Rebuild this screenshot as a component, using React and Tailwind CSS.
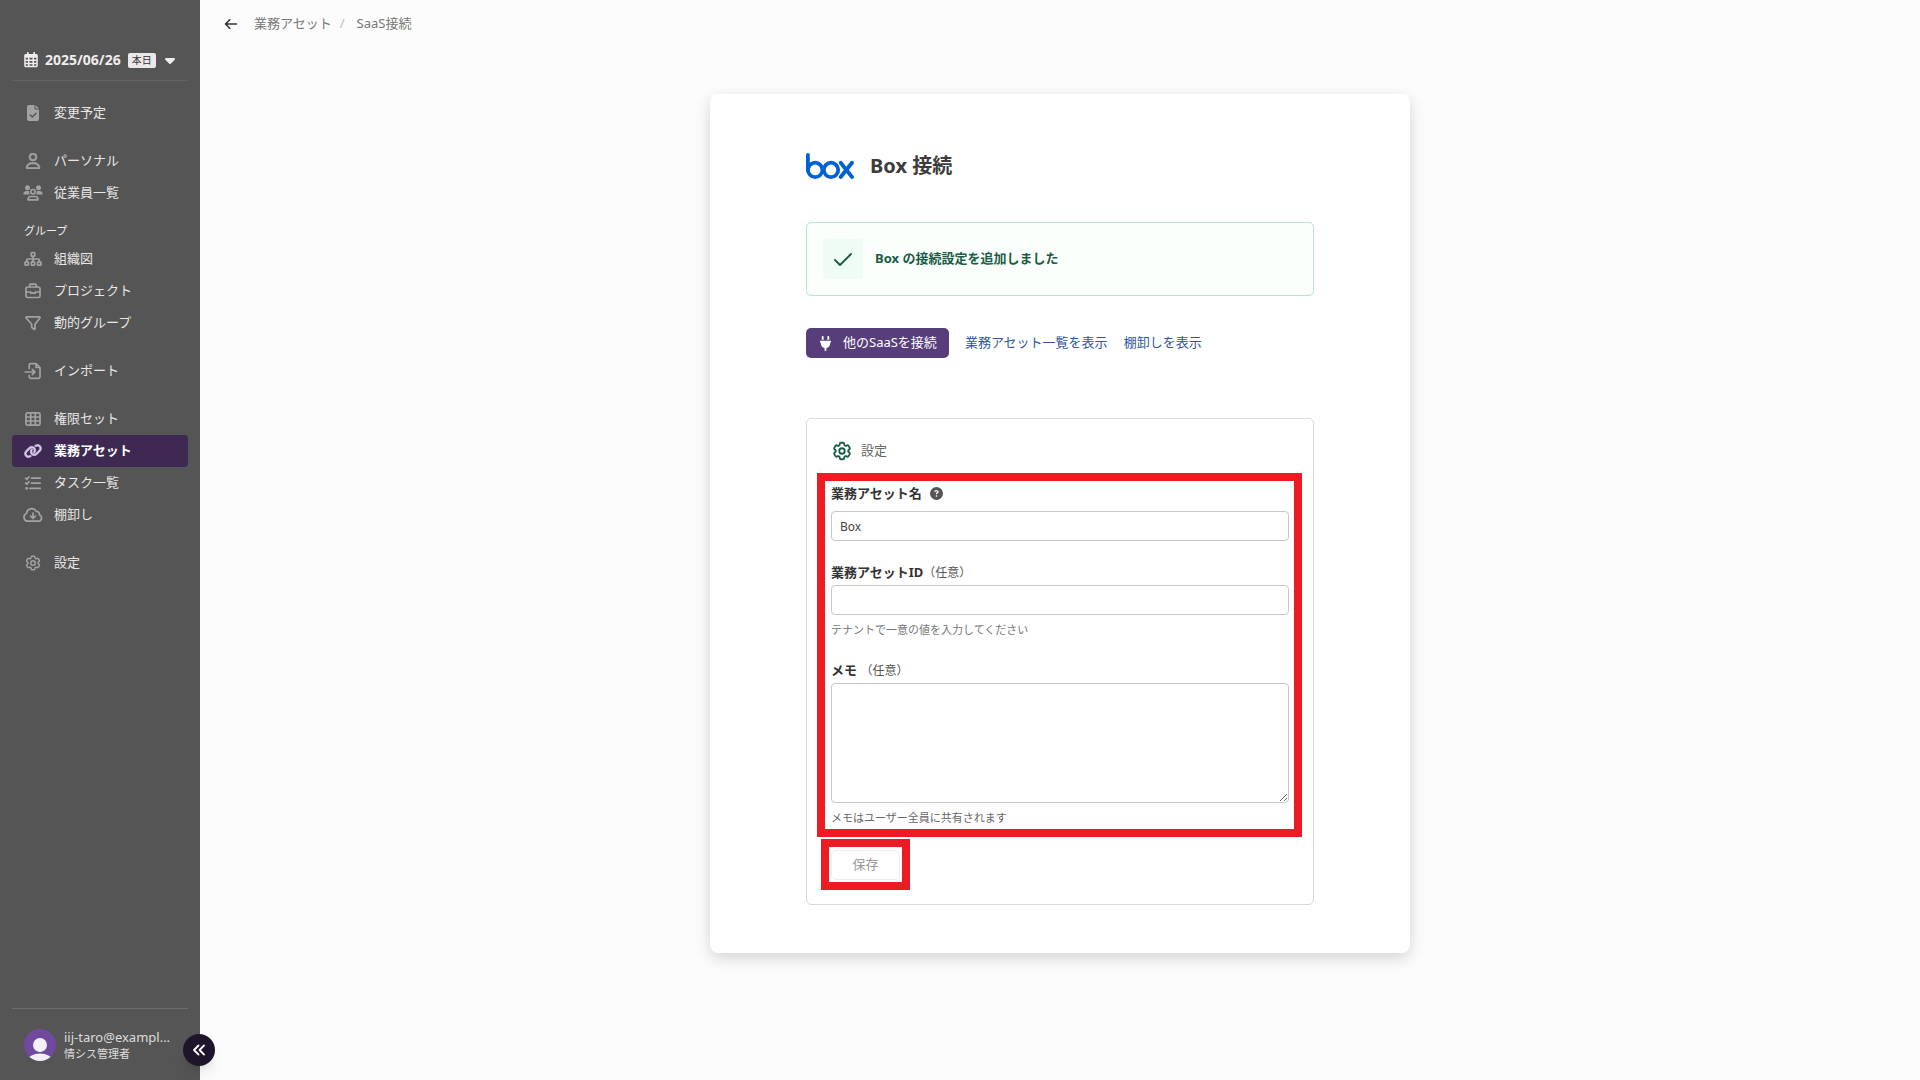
import { FaRegUser, FaLink, FaPlug, FaCaretDown, FaCircleQuestion } from "react-icons/fa6";
import { HiOutlineCog6Tooth } from "react-icons/hi2";

function Icon({ w = 18, h = 18, sw = 1.7, children }) {
  return (
    <svg width={w} height={h} viewBox={`0 0 ${w} ${h}`} fill="none" stroke="currentColor" strokeWidth={sw} strokeLinecap="round" strokeLinejoin="round" aria-hidden="true">
      {children}
    </svg>
  );
}

const CalendarIcon = () => (
  <svg className="shrink-0" width="14" height="16" viewBox="0 0 14 16" fill="currentColor" aria-hidden="true">
    <path fillRule="evenodd" d="M3 .8a.8.8 0 0 1 1.7 0V2h4.600V.8a.8.8 0 0 1 1.7 0V2h1.300c.8 0 1.500.7 1.500 1.500v10.300c0 .8-.7 1.500-1.500 1.500H1.700c-.8 0-1.500-.7-1.500-1.500V3.500C.2 2.700.9 2 1.700 2H3zM1.700 5.800v1.700h2.300V5.800zM5.500 5.800v1.700h3V5.800zM10 5.800v1.700h2.300V5.800zM1.700 9v1.700h2.300V9zM5.500 9v1.700h3V9zM10 9v1.700h2.300V9zM1.700 12.200v1.600h2.300v-1.600zM5.500 12.200v1.600h3v-1.600zM10 12.200v1.600h2.300v-1.600z" />
  </svg>
);

const FileCheckIcon = () => (
  <svg width="18" height="18" viewBox="0 0 18 18" aria-hidden="true">
    <path fill="currentColor" d="M5 1h5.500v3.500c0 .6.4 1 1 1H15V15a2 2 0 0 1-2 2H5a2 2 0 0 1-2-2V3a2 2 0 0 1 2-2zM11.500 1L15 4.500h-3.500z" />
    <path d="M6.300 11l2 2 3.500-3.600" fill="none" stroke="#555555" strokeWidth="1.500" strokeLinecap="round" strokeLinejoin="round" />
  </svg>
);

const PeopleIcon = () => (
  <svg width="20" height="18" viewBox="0 0 20 18" fill="currentColor" aria-hidden="true">
    <circle cx="4.500" cy="3.700" r="2.500" />
    <circle cx="15.500" cy="3.700" r="2.500" />
    <path d="M.3 10.500C.3 8.500 1.500 7 3.300 7h1.500c.5 0 1 .1 1.400.3-.2 1.200.1 2.300.9 3.200zM19.700 10.500c0-2-1.200-3.500-3-3.500h-1.500c-.5 0-1 .1-1.400.3.200 1.200-.1 2.300-.9 3.200z" />
    <circle cx="10" cy="7.700" r="2.200" fill="none" stroke="currentColor" strokeWidth="1.700" />
    <path d="M5 15.800c0-1.900 1.300-3.300 3.100-3.300h3.800c1.800 0 3.100 1.400 3.100 3.300z" fill="none" stroke="currentColor" strokeWidth="1.700" strokeLinejoin="round" />
  </svg>
);

const SitemapIcon = () => (
  <Icon>
    <rect x="7.200" y="2.600" width="3.600" height="3.600" rx=".8" />
    <rect x="1" y="11.800" width="3.400" height="3.400" rx=".8" />
    <rect x="7.300" y="11.800" width="3.400" height="3.400" rx=".8" />
    <rect x="13.600" y="11.800" width="3.400" height="3.400" rx=".8" />
    <path d="M9 6.500v5M2.700 11.500V10c0-.6.4-1 1-1h10.600c.6 0 1 .4 1 1v1.500" />
  </Icon>
);

const BriefcaseIcon = () => (
  <Icon>
    <rect x="2" y="5" width="14" height="10.500" rx="1.600" />
    <path d="M5.700 5V3.200c0-.6.4-1 1-1h4.600c.6 0 1 .4 1 1V5M2 10h4.800v1.200h4.400V10H16" />
  </Icon>
);

const FilterIcon = () => (
  <Icon>
    <path d="M2.600 2.800h12.800c.6 0 .9.700.5 1.200L11 10.200v4.600c0 .5-.5.800-.9.500l-2-1.500c-.3-.2-.4-.4-.4-.7v-2.900L2.100 4c-.4-.5-.1-1.200.5-1.200z" />
  </Icon>
);

const ImportIcon = () => (
  <Icon>
    <path d="M5.200 6.500V3.200c0-.9.700-1.600 1.600-1.600h5.200L16 5.500v9.300c0 .9-.7 1.600-1.600 1.600H6.800c-.9 0-1.600-.7-1.600-1.600v-1.500M12 1.800v3.700h3.800M1.200 10h9.600M8.300 7.300L11 10l-2.700 2.700" />
  </Icon>
);

const TableIcon = () => (
  <Icon>
    <rect x="2" y="2.800" width="14" height="12.400" rx="1.500" />
    <path d="M2 7h14M2 11h14M6.700 3v12M11.300 3v12" />
  </Icon>
);

const TasksIcon = () => (
  <Icon>
    <path d="M1.600 4.200l1.200 1.200 2.200-2.600M1.600 9l1.200 1.200L5 7.600M7.500 4.200h8.700M7.500 9.200h8.700M6 14.400h10.200" />
    <circle cx="2.700" cy="14.400" r=".6" fill="currentColor" />
  </Icon>
);

const CloudIcon = () => (
  <Icon w={20}>
    <path d="M5 15.200a4 4 0 0 1-1.500-7.700 5.200 5.200 0 0 1 9.700-2.200 3.200 3.200 0 0 1 3.300 3.600 3.300 3.300 0 0 1-.7 6.300zM10 7v5.200M7.700 10.200l2.300 2.300 2.300-2.300" />
  </Icon>
);

const ArrowLeftIcon = () => (
  <Icon w={14} h={14} sw={1.6}>
    <path d="M12.500 7H1.800M5.800 2.800L1.500 7l4.300 4.200" />
  </Icon>
);

const BoxLogo = () => (
  <svg width="48" height="26" viewBox="0 0 48 26" fill="none" stroke="#0061d5" strokeWidth="3.800" strokeLinecap="round" role="img" aria-label="Box">
    <path d="M1.900 2v15" />
    <circle cx="9.200" cy="16.900" r="7.200" />
    <circle cx="25" cy="16.900" r="7.200" />
    <path d="M34.700 9.700L46 24M46 9.700L34.700 24" />
  </svg>
);

const Avatar = () => (
  <svg className="shrink-0" width="32" height="32" viewBox="0 0 32 32" aria-hidden="true">
    <defs>
      <clipPath id="avatar-clip">
        <circle cx="16" cy="16" r="16" />
      </clipPath>
    </defs>
    <g clipPath="url(#avatar-clip)">
      <rect width="32" height="32" fill="#6f4a9e" />
      <circle cx="16" cy="16" r="7" fill="#f3f0f7" />
      <ellipse cx="16" cy="31" rx="12" ry="6.500" fill="#f3f0f7" />
    </g>
  </svg>
);

const groups = [
  { items: [{ label: "変更予定", icon: <FileCheckIcon /> }] },
  {
    items: [
      { label: "パーソナル", icon: <FaRegUser size={16} strokeWidth={20} /> },
      { label: "従業員一覧", icon: <PeopleIcon /> },
    ],
  },
  {
    title: "グループ",
    items: [
      { label: "組織図", icon: <SitemapIcon /> },
      { label: "プロジェクト", icon: <BriefcaseIcon /> },
      { label: "動的グループ", icon: <FilterIcon /> },
    ],
  },
  { items: [{ label: "インポート", icon: <ImportIcon /> }] },
  {
    items: [
      { label: "権限セット", icon: <TableIcon /> },
      { label: "業務アセット", icon: <FaLink size={18} strokeWidth={20} />, active: true },
      { label: "タスク一覧", icon: <TasksIcon /> },
      { label: "棚卸し", icon: <CloudIcon /> },
    ],
  },
  { items: [{ label: "設定", icon: <HiOutlineCog6Tooth size={18} strokeWidth={2} /> }] },
];

function NavItem({ label, icon, active }) {
  return (
    <li>
      <a
        href="#"
        aria-current={active ? "page" : undefined}
        className={
          active
            ? "flex h-8 items-center gap-3 rounded bg-[#3d2952] px-3 font-bold text-white"
            : "flex h-8 items-center gap-3 px-3 text-[#e8e6e6]"
        }
      >
        <span className={active ? "flex w-[18px] shrink-0 justify-center text-[#d9c8ee]" : "flex w-[18px] shrink-0 justify-center text-[#a3a1a1]"}>
          <span className="shrink-0">{icon}</span>
        </span>
        {label}
      </a>
    </li>
  );
}

function Sidebar() {
  return (
    <aside className="relative flex w-[200px] shrink-0 flex-col bg-[#555555] px-3">
      <div className="border-b border-[#636363] pt-10">
        <button type="button" className="flex h-10 items-center px-3 whitespace-nowrap text-[#f0ecec]">
          <CalendarIcon />
          <span className="ml-[7px] text-sm font-bold">2025/06/26</span>
          <span className="ml-[7px] rounded-xs bg-[#ebe8ec] px-1 text-[10px] leading-[15px] text-[#333333]">本日</span>
          <FaCaretDown className="ml-1.5 shrink-0" size={16} />
        </button>
      </div>
      <nav className="flex-1">
        {groups.map((group, i) => (
          <div key={i} className={group.title ? "mt-2.5" : "mt-4"}>
            {group.title && <h2 className="px-3 text-[11px] leading-6 text-[#f0eeee]">{group.title}</h2>}
            <ul>
              {group.items.map((item) => (
                <NavItem key={item.label} {...item} />
              ))}
            </ul>
          </div>
        ))}
      </nav>
      <div className="flex h-[72px] items-center gap-2 border-t border-[#6e6e6e] px-3 text-[#dedcdc]">
        <Avatar />
        <div className="min-w-0 flex-1">
          <p className="text-[13px] leading-[18px] whitespace-nowrap">iij-taro@exampl...</p>
          <p className="text-[11px] leading-4">情シス管理者</p>
        </div>
      </div>
      <button type="button" aria-label="メニューを閉じる" className="absolute -right-[15px] bottom-3.5 flex size-8 items-center justify-center rounded-full bg-[#1f152b] text-white shadow-lg">
        <Icon w={14} h={14} sw={1.8}>
          <path d="M6.500 2.500L2 7l4.500 4.500M12 2.500L7.500 7l4.500 4.500" />
        </Icon>
      </button>
    </aside>
  );
}

const inputClass = "block h-[30px] w-full rounded border border-[#c8c8c8] bg-white px-2 text-xs text-[#444444]";

function SettingsForm() {
  return (
    <form className="mt-[60px] rounded-[5px] border border-[#dadada] px-6 pt-5 pb-6" onSubmit={(e) => e.preventDefault()}>
      <h2 className="flex h-6 items-center gap-2 text-[#666666]">
        <HiOutlineCog6Tooth size={22} strokeWidth={2} className="text-[#1a5c46]" />
        設定
      </h2>
      <div className="relative mt-5">
        <div className="pointer-events-none absolute -top-2.5 -right-[13px] -bottom-[11px] -left-3.5 border-8 border-[#ed1c24]" />
        <div className="flex items-center gap-2 leading-5 text-[#333333]">
          <label htmlFor="asset-name" className="font-bold">業務アセット名</label>
          <FaCircleQuestion size={13} className="text-[#555555]" />
        </div>
        <input id="asset-name" type="text" defaultValue="Box" className={`${inputClass} mt-2`} />
        <label htmlFor="asset-id" className="mt-[21px] block leading-5 font-bold text-[#333333]">
          業務アセットID<span className="text-[12px] font-normal text-[#555555]">（任意）</span>
        </label>
        <input id="asset-id" type="text" className={`${inputClass} mt-0.5`} />
        <p className="mt-[7px] text-[11px] leading-4 text-[#777777]">テナントで一意の値を入力してください</p>
        <label htmlFor="memo" className="mt-[22px] block leading-5 font-bold text-[#333333]">
          メモ <span className="text-[12px] font-normal text-[#555555]">（任意）</span>
        </label>
        <textarea id="memo" className="mt-0.5 block h-[120px] w-full resize rounded border border-[#c8c8c8] bg-white px-2 py-1 text-xs" />
        <p className="mt-[7px] text-[11px] leading-4 text-[#666666]">メモはユーザー全員に共有されます</p>
      </div>
      <div className="relative mt-6 w-[69px]">
        <div className="pointer-events-none absolute -inset-x-2.5 -top-[11px] -bottom-2.5 border-8 border-[#ed1c24]" />
        <button type="submit" disabled className="block h-[30px] w-full rounded-[5px] border border-[#ededed] bg-white text-[#999999]">
          保存
        </button>
      </div>
    </form>
  );
}

export default function App() {
  return (
    <div lang="ja" className="flex min-h-screen bg-[#fcfcfc] text-[13px] [font-family:'Noto_Sans','Noto_Sans_CJK_JP',sans-serif]">
      <Sidebar />
      <div className="min-w-0 flex-1">
        <nav aria-label="パンくず" className="flex h-12 items-center pl-6 text-[#777777]">
          <a href="#" aria-label="戻る" className="text-[#333333]"><ArrowLeftIcon /></a>
          <a href="#" className="ml-4">業務アセット</a>
          <span className="ml-2 text-[#bbbbbb]">/</span>
          <span className="ml-3">SaaS接続</span>
        </nav>
        <main className="mx-auto mt-[46px] mb-12 max-w-[700px] rounded-lg bg-white px-24 pt-14 pb-12 shadow-[0_5px_16px_rgba(0,0,0,0.16)]">
          <div className="flex h-8 items-center gap-4">
            <BoxLogo />
            <h1 className="text-xl leading-8 font-bold text-[#3c3c3c]">Box 接続</h1>
          </div>
          <div role="status" className="mt-10 flex items-center gap-3 rounded-[5px] border border-[#bfe0d3] bg-[#fbfffc] p-4">
            <span className="flex size-10 items-center justify-center rounded bg-[#effbf5] text-[#1a5c46]">
              <Icon w={20} h={20} sw={1.9}>
                <path d="M2 11l5 5L18 5" />
              </Icon>
            </span>
            <p className="font-bold text-[#1a5c46]">Box の接続設定を追加しました</p>
          </div>
          <div className="mt-8 flex items-center gap-4 text-[#2f56a0]">
            <button type="button" className="flex h-[30px] items-center gap-2.5 rounded-[5px] bg-[#573d7a] px-3 text-white">
              <FaPlug size={15} />
              他のSaaSを接続
            </button>
            <a href="#">業務アセット一覧を表示</a>
            <a href="#">棚卸しを表示</a>
          </div>
          <SettingsForm />
        </main>
      </div>
    </div>
  );
}
